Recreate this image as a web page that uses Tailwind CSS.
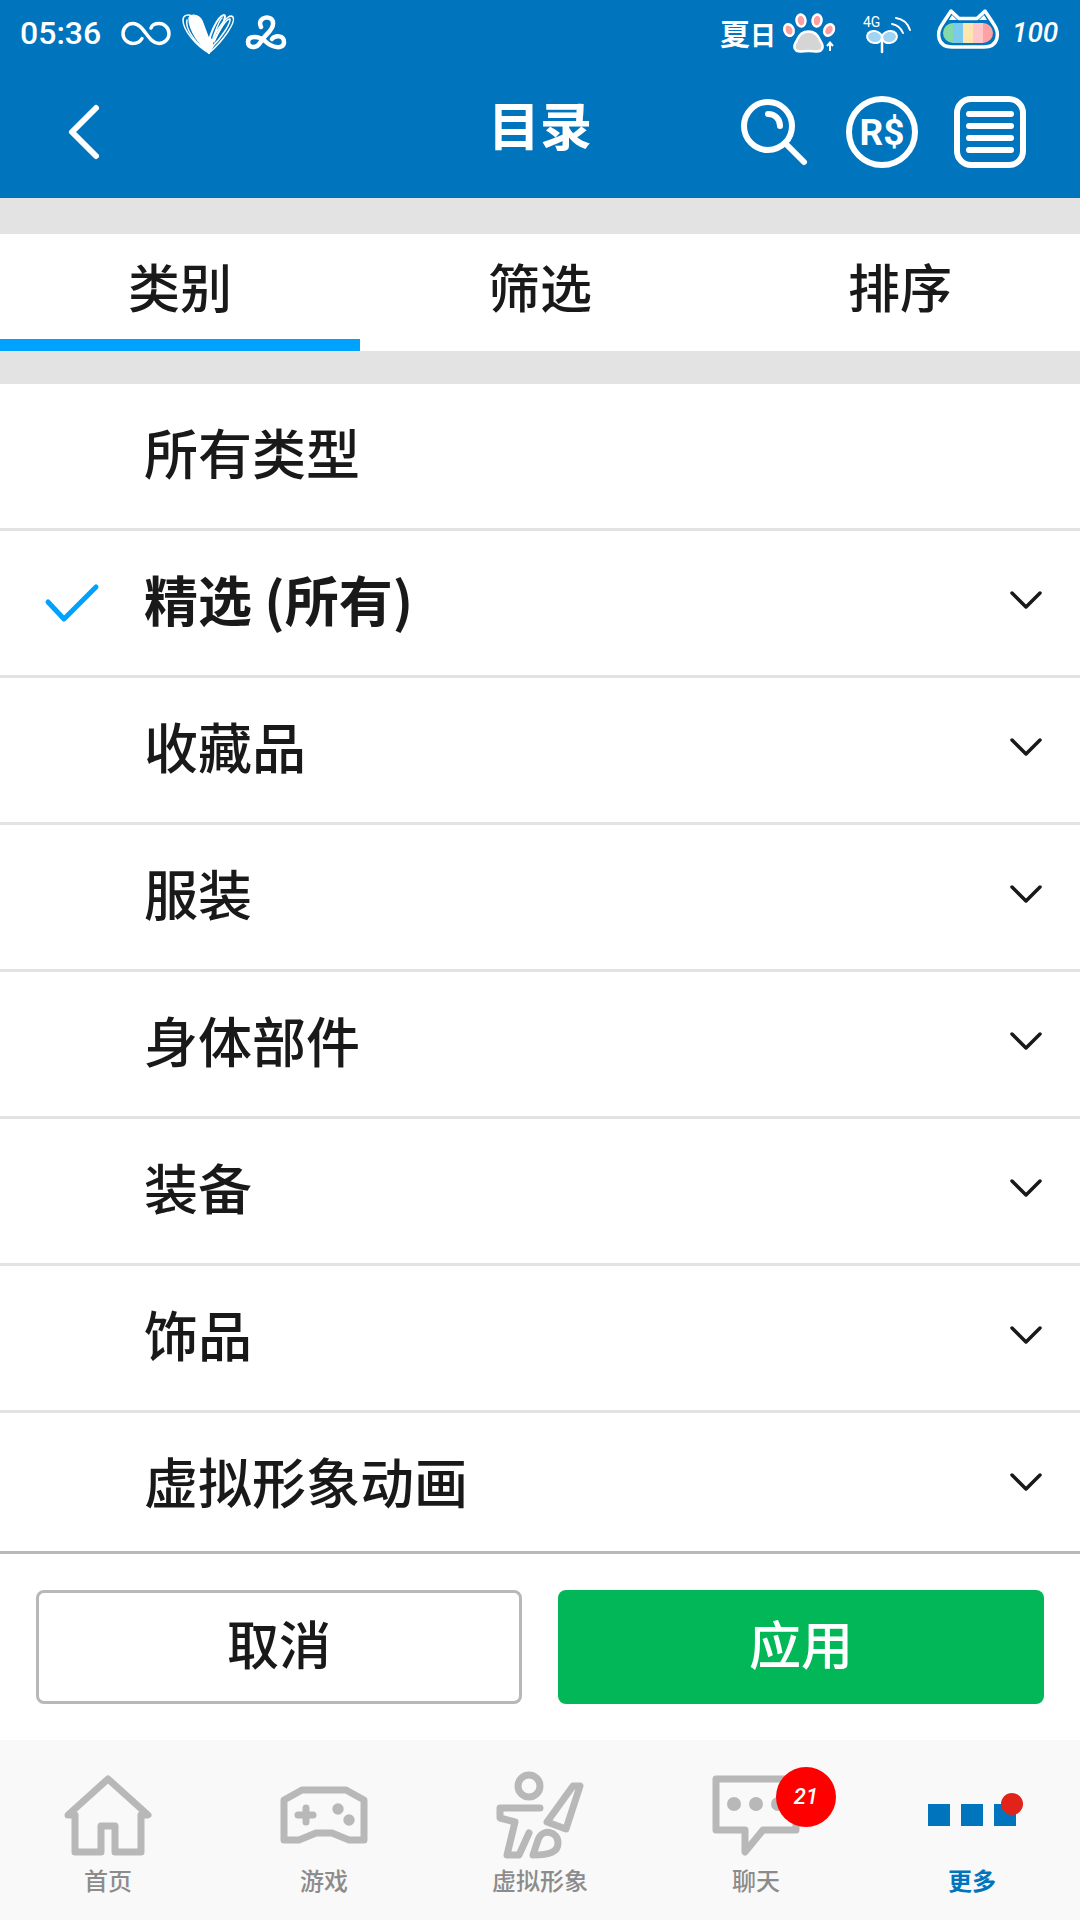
<!DOCTYPE html>
<html lang="zh-CN">

<head>
    <meta charset="UTF-8">
    <meta name="viewport" content="width=device-width, initial-scale=1.0">
    <title>目录</title>
    <script src="https://cdn.jsdelivr.net/npm/@tailwindcss/browser@4"></script>
</head>

<body class="flex h-screen flex-col overflow-hidden bg-white font-['Noto_Sans_CJK_SC',sans-serif] text-[#191919]">

    <header class="bg-[#0074bd] text-white">
        <!-- Status bar -->
        <div class="flex h-[66px] items-center justify-between px-5">
            <div class="flex items-center gap-1">
                <span class="w-24 font-['Roboto',sans-serif] text-[32px] leading-8 font-medium">05:36</span>
                <svg class="h-[66px] w-[52px]" viewBox="120 0 52 66" fill="none" stroke="currentColor" stroke-width="3.5" stroke-linecap="round" aria-hidden="true">
                    <path d="M142 38.5C140 42 137 43.5 133 43.5A10 10 0 0 1 133 23.5C144 23.5 148 43.5 159 43.5A10 10 0 0 0 159 23.5C155 23.5 152 25 151 28" />
                </svg>
                <svg class="h-[66px] w-[62px]" viewBox="176 0 62 66" fill="none" stroke="currentColor" stroke-width="1.5" stroke-linecap="round" stroke-linejoin="round" aria-hidden="true">
                    <path fill="currentColor" d="M189 18C191 14 199 14 202 21L208 37L211 39L213 46L209 53C201 46 189 31 189 18Z" />
                    <path d="M209 53C196 46 183 30 183 20C183 15 188 14 192 16M207 51C194 42 185 28 187 20" />
                    <path stroke-width="2" d="M209 53C206 38 218 16 224 15C228 15 219 33 211 44" />
                    <path d="M211 44C216 30 228 12 233 17C236 22 224 40 209 53M214 42C219 30 227 18 230 19C231 23 222 37 212 47M213 38C216 30 219 20 222 18" />
                </svg>
                <svg class="h-[66px] w-12" viewBox="242 0 48 66" fill="none" stroke="currentColor" stroke-width="4.5" stroke-linecap="round" aria-hidden="true">
                    <path d="M261 27C256 16 274 14 273 24C273 31 264 35 260 43C256 49 248 48 248 42C248 35 259 36 265 41C272 48 284 50 284 42C284 35 275 35 272 39" />
                </svg>
            </div>
            <div class="flex items-center gap-1">
                <span class="text-[30px] leading-8 font-bold">夏<span class="text-[26px]">日</span></span>
                <svg class="h-[66px] w-[74px]" viewBox="780 0 74 66" aria-hidden="true">
                    <path fill="#d5d5d5" stroke="#fff" stroke-width="2.5" d="M808.5 31.5C814 31.5 818 35 820 40C822 44 824 46 822 49C820 53 815 51 808.5 51C802 51 797 53 795 49C793 46 795 44 797 40C799 35 803 31.5 808.5 31.5Z" />
                    <g fill="#ff9d9f" stroke="#fff" stroke-width="2.5">
                        <ellipse cx="789" cy="30" rx="4.5" ry="6" transform="rotate(-22 789 30)" />
                        <ellipse cx="801" cy="20.5" rx="4.5" ry="6" transform="rotate(-8 801 20.5)" />
                        <ellipse cx="817" cy="20.5" rx="4.5" ry="6" transform="rotate(8 817 20.5)" />
                        <ellipse cx="829" cy="30" rx="4.5" ry="6" transform="rotate(32 829 30)" />
                    </g>
                    <path fill="none" stroke="#fff" stroke-width="2" d="M830 51V43M827 46L830 42.5L833 46" />
                </svg>
                <svg class="h-[66px] w-[70px]" viewBox="858 0 70 66" fill="none" stroke="#fff" stroke-width="2" stroke-linecap="round" aria-hidden="true">
                    <text x="863" y="27" font-family="Roboto, sans-serif" font-size="14" fill="#fff" stroke="none">4G</text>
                    <ellipse cx="874.5" cy="37" rx="7.5" ry="6" fill="#9fd4f5" transform="rotate(12 874.5 37)" />
                    <ellipse cx="889.5" cy="37" rx="7.5" ry="6" fill="#9fd4f5" transform="rotate(-12 889.5 37)" />
                    <path stroke-width="2.5" d="M882 38V52" />
                    <path d="M896 18C903 19 908 24 910 30M892 24C897 25 901 28 903 33" />
                </svg>
                <svg class="h-[66px] w-[76px]" viewBox="932 0 76 66" aria-hidden="true">
                    <path fill="none" stroke="#fff" stroke-width="3.5" stroke-linejoin="round" d="M951 11L959 18.5H977L985 11L993 23C1001 34 998 47 984 47H952C938 47 935 34 943 23Z" />
                    <path fill="#fff" d="M952 15L957 20H949ZM984 15L979 20H987Z" />
                    <path fill="#83d9a9" d="M953 23V43A10 10 0 0 1 953 23Z" />
                    <path fill="#7cc9ee" d="M953 23H963V43H953Z" />
                    <path fill="#ffe5ae" d="M963 23H973V43H963Z" />
                    <path fill="#ffc5c8" d="M973 23H983V43H973Z" />
                    <path fill="#ffa2a4" d="M983 23A10 10 0 0 1 983 43Z" />
                </svg>
                <span class="w-12 font-['Roboto',sans-serif] text-[28px] leading-8 font-medium italic">100</span>
            </div>
        </div>

        <!-- Title bar -->
        <div class="grid h-[132px] grid-cols-3 items-center px-[54px]">
            <button type="button" aria-label="返回" class="size-[72px]">
                <svg class="size-full" viewBox="0 0 72 72" fill="none" stroke="currentColor" stroke-width="6" stroke-linecap="round" stroke-linejoin="round">
                    <path d="M42 12L18 36L42 60" />
                </svg>
            </button>
            <h1 class="pb-4 text-center text-[52px] leading-[72px] font-bold">目录</h1>
            <div class="flex justify-end gap-9">
                <button type="button" aria-label="搜索" class="size-[72px] shrink-0">
                    <svg class="size-full" viewBox="0 0 72 72" fill="none" stroke="currentColor" stroke-width="6" stroke-linecap="round">
                        <circle cx="30" cy="30" r="24" />
                        <path d="M30 18C37 18 42 23 42 30M47 47L66 66" />
                    </svg>
                </button>
                <button type="button" aria-label="Robux" class="size-[72px] shrink-0">
                    <svg class="size-full" viewBox="0 0 72 72">
                        <circle cx="36" cy="36" r="33" fill="none" stroke="currentColor" stroke-width="6" />
                        <text x="36" y="49" text-anchor="middle" font-family="Roboto, sans-serif" font-size="37" font-weight="700" fill="currentColor">R$</text>
                    </svg>
                </button>
                <button type="button" aria-label="菜单" class="size-[72px] shrink-0">
                    <svg class="size-full" viewBox="0 0 72 72" fill="none" stroke="currentColor" stroke-width="6" stroke-linecap="round">
                        <rect x="3" y="3" width="66" height="66" rx="14" />
                        <path d="M15 18H57M15 30H57M15 42H57M15 54H57" />
                    </svg>
                </button>
            </div>
        </div>
    </header>

    <!-- Tabs -->
    <div role="tablist" class="grid grid-cols-3 border-t-[36px] border-b-[33px] border-[#e3e3e3] text-[52px] leading-[72px] font-medium">
        <button type="button" role="tab" aria-selected="true" class="border-b-[12px] border-[#00a2ff] pt-4 pb-[17px]">类别</button>
        <button type="button" role="tab" aria-selected="false" class="border-b-[12px] border-transparent pt-4 pb-[17px]">筛选</button>
        <button type="button" role="tab" aria-selected="false" class="border-b-[12px] border-transparent pt-4 pb-[17px]">排序</button>
    </div>

    <!-- Category list, filled in below -->
    <ul id="category-list" class="min-h-0 flex-1 overflow-hidden"></ul>

    <!-- Actions -->
    <div class="grid grid-cols-2 gap-9 border-t-[3px] border-[#b8b8b8] p-9 text-[52px] leading-[72px] font-medium">
        <button type="button" class="h-[114px] rounded-lg border-[3px] border-[#b8b8b8] bg-white pb-2">取消</button>
        <button type="button" class="h-[114px] rounded-lg bg-[#02b757] pb-2 text-white">应用</button>
    </div>

    <!-- Bottom navigation -->
    <nav class="grid grid-cols-5 bg-[#f9f9f9] pt-[30px] pb-6 text-2xl leading-8 font-medium text-[#8c8c8c]">
        <a href="#" class="flex flex-col items-center gap-1">
            <svg class="h-[90px] w-24" viewBox="0 0 96 90" fill="none" stroke="#b8b8b8" stroke-width="7" stroke-linecap="round" stroke-linejoin="round">
                <path d="M15 45H8L48 9L88 45H81V82H55V56H41V82H15Z" />
            </svg>
            <span>首页</span>
        </a>
        <a href="#" class="flex flex-col items-center gap-1">
            <svg class="h-[90px] w-24" viewBox="0 0 96 90" fill="none" stroke="#b8b8b8" stroke-width="7" stroke-linecap="round" stroke-linejoin="round">
                <path d="M8 30L26 20H70L88 30V70H73L56 63H40L23 70H8Z" />
                <path d="M22 45H37M30 38V52" />
                <circle cx="62" cy="39" r="5.7" fill="#b8b8b8" stroke="none" />
                <circle cx="73" cy="50" r="5.7" fill="#b8b8b8" stroke="none" />
            </svg>
            <span>游戏</span>
        </a>
        <a href="#" class="flex flex-col items-center gap-1">
            <svg class="h-[90px] w-24" viewBox="0 0 96 90" fill="none" stroke="#b8b8b8" stroke-width="7" stroke-linecap="round" stroke-linejoin="round">
                <circle cx="37" cy="16" r="11" />
                <path d="M48 38H8V48L23 52L15 85H27L37 63" />
                <path d="M81 16H88L74 59L55 52Z" />
                <path d="M41 85L46 70C50 58 66 61 66 73C66 82 58 85 41 85Z" />
            </svg>
            <span>虚拟形象</span>
        </a>
        <a href="#" class="flex flex-col items-center gap-1">
            <span class="relative">
                <svg class="h-[90px] w-24" viewBox="0 0 96 90" fill="none" stroke="#b8b8b8" stroke-width="7" stroke-linecap="round" stroke-linejoin="round">
                    <path d="M8 9H88V60H55L37 82V60H8Z" />
                    <g fill="#b8b8b8" stroke="none">
                        <circle cx="26" cy="34" r="7" />
                        <circle cx="48" cy="34" r="7" />
                        <circle cx="70" cy="34" r="7" />
                    </g>
                </svg>
                <span class="absolute -top-[3px] left-[68px] flex size-[60px] items-center justify-center rounded-full bg-[#ff0000] font-['Roboto',sans-serif] text-[22px] leading-8 text-white italic">21</span>
            </span>
            <span>聊天</span>
        </a>
        <a href="#" aria-current="page" class="flex flex-col items-center gap-1 font-bold text-[#0074bd]">
            <svg class="h-[90px] w-24" viewBox="0 0 96 90" overflow="visible">
                <path fill="#0074bd" d="M4 34H26V56H4ZM37 34H59V56H37ZM70 34H92V56H70Z" />
                <circle cx="88" cy="34" r="11" fill="#e2231a" />
            </svg>
            <span>更多</span>
        </a>
    </nav>

    <script>
        const categories = [
            { name: '所有类型', expandable: false },
            { name: '精选 (所有)', expandable: true, selected: true },
            { name: '收藏品', expandable: true },
            { name: '服装', expandable: true },
            { name: '身体部件', expandable: true },
            { name: '装备', expandable: true },
            { name: '饰品', expandable: true },
            { name: '虚拟形象动画', expandable: true },
        ];

        const check = '<path d="M12 23L28 40L60 8" />';
        const chevron = `
            <svg class="size-9" viewBox="0 0 36 36" fill="none" stroke="currentColor" stroke-width="3.5" stroke-linecap="round" stroke-linejoin="round">
                <path d="M4 8L18 22L32 8" />
            </svg>`;

        // Build one row per category
        document.getElementById('category-list').innerHTML = categories.map(item => `
            <li class="border-b-[3px] border-[#e3e3e3]">
                <button type="button" class="flex w-full items-center p-9 text-left text-[54px] leading-16">
                    <svg class="mr-9 h-12 w-[72px] shrink-0" viewBox="0 0 72 48" fill="none" stroke="#00a2ff" stroke-width="5" stroke-linecap="round" stroke-linejoin="round">${item.selected ? check : ''}</svg>
                    <span class="flex-1 pb-2 ${item.selected ? 'font-bold' : 'font-medium'}">${item.name}</span>
                    ${item.expandable ? chevron : ''}
                </button>
            </li>
        `).join('');
    </script>

</body>

</html>
